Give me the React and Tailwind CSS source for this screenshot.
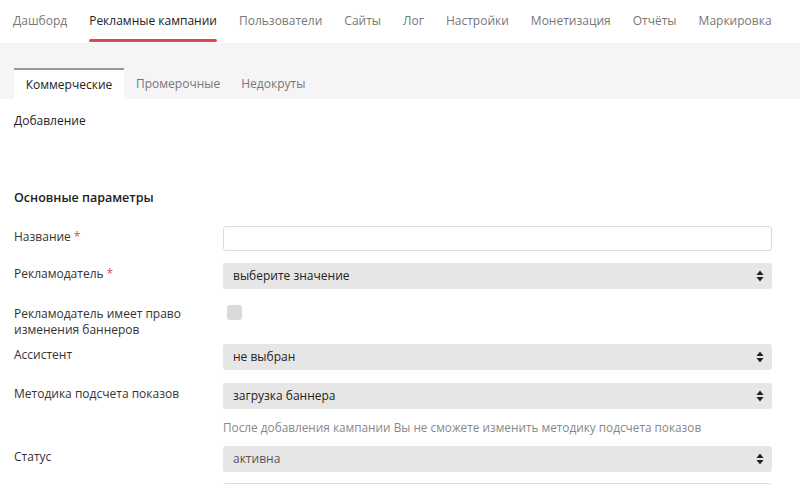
import React from 'react';

const navItems = ['Дашборд', 'Рекламные кампании', 'Пользователи', 'Сайты', 'Лог', 'Настройки', 'Монетизация', 'Отчёты', 'Маркировка'];

const Arrows = () => (
  <svg width="8" height="12" viewBox="0 0 8 12" className="shrink-0">
    <path d="M4 0.5 L7.5 5 L0.5 5 Z" fill="#222" />
    <path d="M4 11.5 L7.5 7 L0.5 7 Z" fill="#222" />
  </svg>
);

const Select = ({ value, muted }) => (
  <div className="h-[26px] w-full bg-[#e6e6e6] rounded-[3px] flex items-center justify-between pl-[10px] pr-[8px]">
    <span className={`text-[12px] ${muted ? 'text-[#555]' : 'text-[#222]'}`}>{value}</span>
    <Arrows />
  </div>
);

const Row = ({ label, required, children, className = '' }) => (
  <div className={`grid grid-cols-[209px_1fr] items-start ${className}`}>
    <div className="text-[12px] text-[#333] leading-[16px] pt-[3px]">
      {label}
      {required && <span className="text-[#e0474c] ml-[3px]">*</span>}
    </div>
    <div>{children}</div>
  </div>
);

export default function App() {
  return (
    <div className="w-[800px] h-[485px] overflow-hidden bg-white font-['Open_Sans',sans-serif]">
      {/* Верхнее меню */}
      <div className="h-[43px] flex items-stretch pl-[13px] gap-[22px]">
        {navItems.map((item, i) => (
          <div
            key={item}
            className={`relative flex items-center whitespace-nowrap text-[12px] pb-[2px] ${i === 1 ? 'text-[#222]' : 'text-[#777]'}`}
          >
            {item}
            {i === 1 && <div className="absolute left-0 right-0 bottom-[1px] h-[3px] bg-[#e0474c] rounded-full"></div>}
          </div>
        ))}
      </div>

      {/* Вкладки */}
      <div className="bg-[#f5f5f5] h-[56px] flex items-end pl-[14px]">
        <div className="h-[31px] w-[110px] bg-white border-t-2 border-[#9a9a9a] flex items-center justify-center text-[12px] text-[#222]">
          Коммерческие
        </div>
        <div className="h-[31px] flex items-center text-[12px] text-[#777] ml-[12px]">Промерочные</div>
        <div className="h-[31px] flex items-center text-[12px] text-[#777] ml-[21px]">Недокруты</div>
      </div>

      {/* Форма */}
      <div className="pl-[14px] pr-[28px]">
        <div className="pt-[14px] text-[12px] text-[#222] leading-[16px]">Добавление</div>
        <div className="pt-[61px] text-[12.5px] font-semibold text-[#222] leading-[16px]">Основные параметры</div>

        <Row label="Название" required className="mt-[20px]">
          <div className="h-[25px] w-full bg-white border border-[#dcdcdc] rounded-[3px]"></div>
        </Row>

        <Row label="Рекламодатель" required className="mt-[12px]">
          <Select value="выберите значение" />
        </Row>

        <Row label={<>Рекламодатель имеет право<br />изменения баннеров</>} className="mt-[14px]">
          <div className="mt-[2px] ml-[4px] w-[15px] h-[15px] rounded-[3px] bg-[#dadada]"></div>
        </Row>

        <Row label="Ассистент" className="mt-[6px]">
          <Select value="не выбран" />
        </Row>

        <Row label="Методика подсчета показов" className="mt-[13px]">
          <Select value="загрузка баннера" />
          <div className="text-[11.8px] text-[#888] mt-[10px] leading-[16px] whitespace-nowrap">
            После добавления кампании Вы не сможете изменить методику подсчета показов
          </div>
        </Row>

        <Row label="Статус" className="mt-[11px]">
          <Select value="активна" muted />
        </Row>

        <Row label="" className="mt-[11px]">
          <div className="h-[25px] w-full bg-white border border-[#dcdcdc] rounded-[3px]"></div>
        </Row>
      </div>
    </div>
  );
}
